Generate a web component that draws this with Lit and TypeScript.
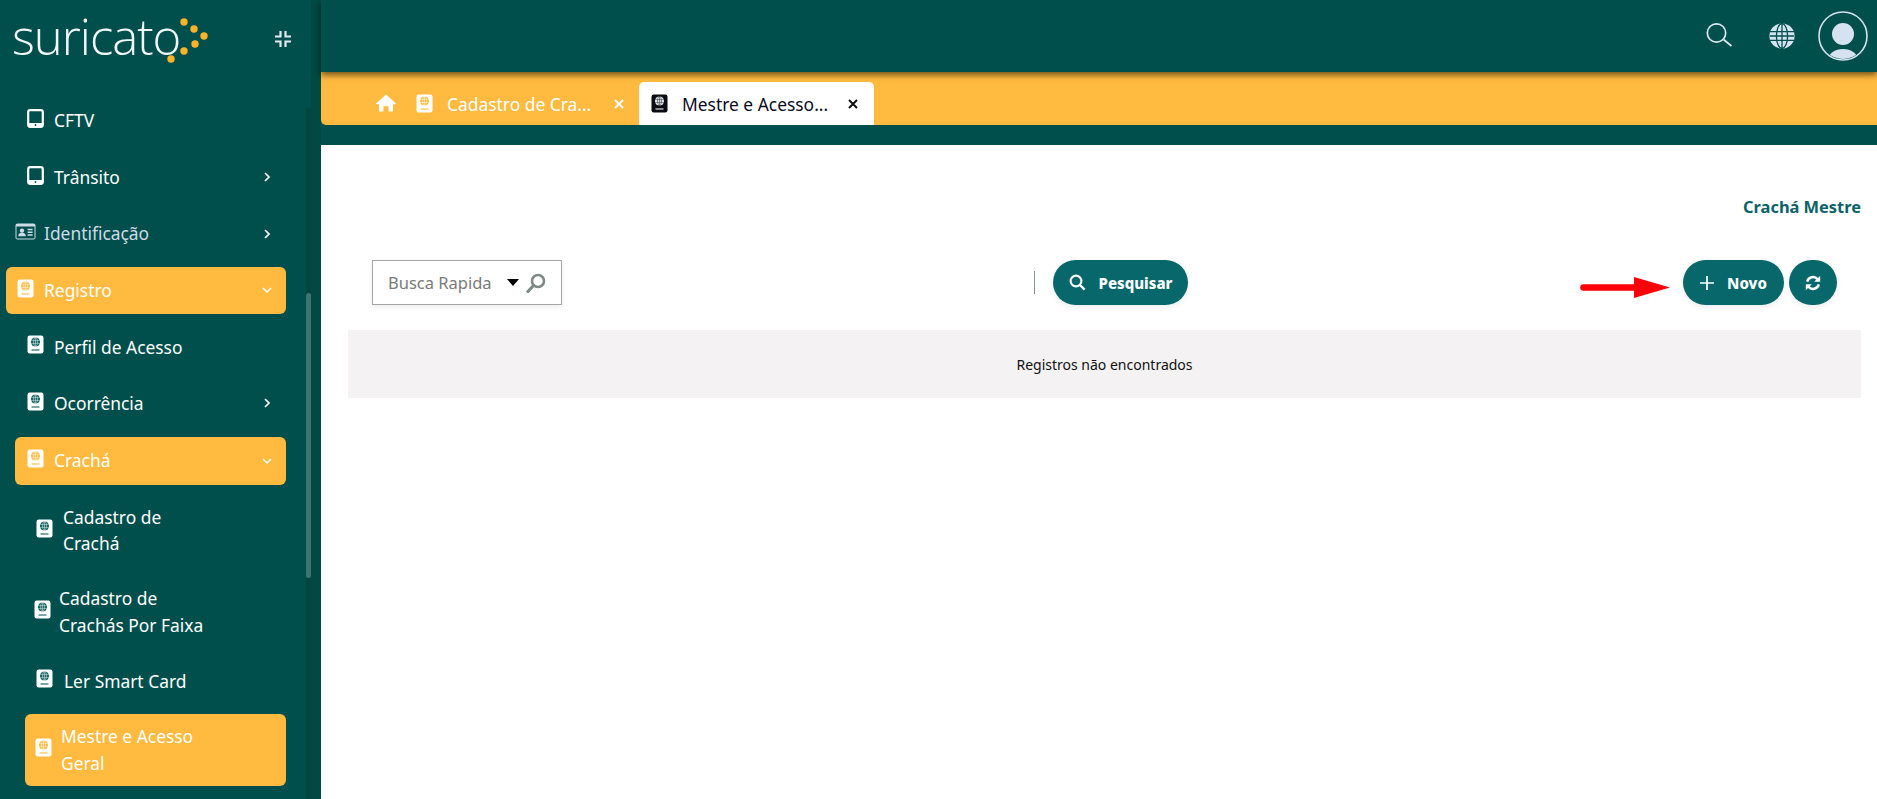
import { LitElement, css, html, svg } from 'lit'
import { customElement } from 'lit/decorators.js'

type NavIcon = 'tablet' | 'card' | 'passport'

interface NavItem {
  lines: string[]
  icon: NavIcon
  left: number
  iconLeft: number
  textLeft: number
  active?: boolean
  chevron?: 'right' | 'down'
  muted?: boolean
  height?: number
}

const NAV: NavItem[] = [
  { lines: ['CFTV'], icon: 'tablet', left: 15, iconLeft: 12, textLeft: 39 },
  { lines: ['Trânsito'], icon: 'tablet', left: 15, iconLeft: 12, textLeft: 39, chevron: 'right' },
  { lines: ['Identificação'], icon: 'card', left: 6, iconLeft: 9, textLeft: 38, chevron: 'right', muted: true },
  { lines: ['Registro'], icon: 'passport', left: 6, iconLeft: 11, textLeft: 38, chevron: 'down', active: true },
  { lines: ['Perfil de Acesso'], icon: 'passport', left: 15, iconLeft: 12, textLeft: 39 },
  { lines: ['Ocorrência'], icon: 'passport', left: 15, iconLeft: 12, textLeft: 39, chevron: 'right' },
  { lines: ['Crachá'], icon: 'passport', left: 15, iconLeft: 12, textLeft: 39, chevron: 'down', active: true, height: 48 },
  { lines: ['Cadastro de', 'Crachá'], icon: 'passport', left: 25, iconLeft: 11, textLeft: 38 },
  { lines: ['Cadastro de', 'Crachás Por Faixa'], icon: 'passport', left: 25, iconLeft: 9, textLeft: 34 },
  { lines: ['Ler Smart Card'], icon: 'passport', left: 25, iconLeft: 11, textLeft: 39 },
  { lines: ['Mestre e Acesso', 'Geral'], icon: 'passport', left: 25, iconLeft: 10, textLeft: 36, active: true },
]

const passport = (body: string, mark: string) => html`
  <svg class="glyph" width="17" height="19" viewBox="0 0 17 19">
    <rect x="0.5" y="0.5" width="16" height="18" rx="2.2" fill=${body}></rect>
    <circle cx="8.5" cy="7" r="4.6" fill=${mark}></circle>
    <g fill="none" stroke=${body} stroke-width="0.45">
      <ellipse cx="8.5" cy="7" rx="2" ry="4.6"></ellipse>
      <path d="M3.9 5.6h9.2M3.9 8.4h9.2M8.5 2.4v9.2"></path>
    </g>
    <path d="M4.5 15h8" stroke=${mark} stroke-width="1.1"></path>
  </svg>
`

const tablet = html`
  <svg class="glyph" width="17" height="19" viewBox="0 0 17 19">
    <rect x="1.2" y="1.2" width="14.6" height="16.6" rx="2" fill="none" stroke="#fff" stroke-width="2.2"></rect>
    <path d="M1.5 14h14v3.5h-14z" fill="#fff"></path>
    <circle cx="8.5" cy="16" r="0.9" fill="#004f4d"></circle>
  </svg>
`

const idCard = html`
  <svg class="glyph" width="21" height="17" viewBox="0 0 21 17">
    <rect x="0.5" y="0.5" width="20" height="16" rx="2" fill="#cfdbe6"></rect>
    <rect x="1.5" y="3.5" width="18" height="12" fill="#004f4d"></rect>
    <circle cx="7" cy="7.6" r="2.2" fill="#cfdbe6"></circle>
    <path d="M3.2 13.2c0-2.6 1.7-3.5 3.8-3.5s3.8 .9 3.8 3.5z" fill="#cfdbe6"></path>
    <path d="M12.6 6.5h5M12.6 9.3h5M12.6 12.1h5" stroke="#cfdbe6" stroke-width="1.5"></path>
  </svg>
`

const chevronRight = html`
  <svg width="8" height="12" viewBox="0 0 8 12"><path d="M2 2l4 4-4 4" fill="none" stroke="#fff" stroke-width="1.7"></path></svg>
`

const chevronDown = html`
  <svg width="12" height="8" viewBox="0 0 12 8"><path d="M2 2l4 4 4-4" fill="none" stroke="#fff" stroke-width="1.5"></path></svg>
`

const close = (color: string) => html`
  <svg class="close" width="10" height="10" viewBox="0 0 10 10">
    <path d="M1 1l8 8M9 1l-8 8" stroke=${color} stroke-width="1.9"></path>
  </svg>
`

const logoDots = [
  [184, 22],
  [194, 29],
  [204, 36],
  [195, 44],
  [184, 51],
  [171, 59],
]

@customElement('app-root')
export class AppRoot extends LitElement {
  render() {
    return html`
      <aside class="sidebar">
        <div class="side-main">
          <div class="brand">
            <span class="logo">suricato</span>
            <svg class="dots" width="210" height="72" viewBox="0 0 210 72">
              ${logoDots.map(([x, y]) => svg`<circle cx=${x} cy=${y} r="3.7" fill="#fbb327"></circle>`)}
            </svg>
            <svg class="compress" width="18" height="18" viewBox="0 0 18 18">
              <path d="M6.5 1v5.5H1M11.5 1v5.5H17M6.5 17v-5.5H1M11.5 17v-5.5H17" fill="none" stroke="#e3e9ee" stroke-width="2.2"></path>
            </svg>
          </div>
          <nav>${NAV.map((item) => this.navItem(item))}</nav>
        </div>
        <div class="track"><div class="thumb"></div></div>
        <div class="edge"></div>
      </aside>

      <div class="main">
        <header class="topbar">
          <svg width="30" height="30" viewBox="0 0 30 30" class="top-search">
            <circle cx="12.5" cy="12" r="9.2" fill="none" stroke="#dbe6ef" stroke-width="1.7"></circle>
            <path d="M19.5 18.5l8 6.5" stroke="#dbe6ef" stroke-width="1.8"></path>
          </svg>
          <svg width="26" height="26" viewBox="0 0 26 26" class="top-globe">
            <circle cx="13" cy="13" r="12.6" fill="#d5e2ef"></circle>
            <g fill="none" stroke="#004f4d" stroke-width="1.3">
              <ellipse cx="13" cy="13" rx="5.6" ry="12.4"></ellipse>
              <path d="M13 .5v25M1 8.6h24M1 13h24M1 17.4h24"></path>
            </g>
          </svg>
          <svg width="50" height="50" viewBox="0 0 50 50" class="top-user">
            <defs><clipPath id="avatar"><circle cx="25" cy="25" r="23"></circle></clipPath></defs>
            <circle cx="25" cy="25" r="24" fill="none" stroke="#d5e2ef" stroke-width="1.6"></circle>
            <circle cx="25" cy="23" r="11" fill="#d5e2ef"></circle>
            <ellipse cx="25" cy="49" rx="15" ry="11" fill="#d5e2ef" clip-path="url(#avatar)"></ellipse>
          </svg>
        </header>

        <div class="tabs">
          <svg class="home" width="20" height="18" viewBox="0 0 20 18">
            <path d="M10 .5L0 9.5c-.2.4 0 .8.5.8H3v6.6c0 .4.3.7.7.7h3.8v-5.4h5v5.4h3.8c.4 0 .7-.3.7-.7v-6.6h2.5c.5 0 .7-.4.5-.8z" fill="#fff"></path>
          </svg>
          <div class="tab">
            ${passport('#fff', '#ffba3f')}
            <span class="tab-text">Cadastro de Cra...</span>
            ${close('#fff')}
          </div>
          <div class="tab current">
            ${passport('#0b0b12', '#e8eef2')}
            <span class="tab-text">Mestre e Acesso...</span>
            ${close('#0b0b12')}
          </div>
        </div>

        <div class="band"></div>

        <section class="content">
          <h2>Crachá Mestre</h2>
          <div class="toolbar">
            <div class="quick">
              <span>Busca Rapida</span>
              <i class="caret"></i>
              <svg width="20" height="20" viewBox="0 0 20 20">
                <circle cx="12" cy="8" r="6" fill="none" stroke="#7d8a85" stroke-width="2.6"></circle>
                <path d="M7.5 12.5L2 18.5" stroke="#7d8a85" stroke-width="3.2" stroke-linecap="round"></path>
              </svg>
            </div>
            <span class="divider"></span>
            <button class="btn search">
              <svg width="17" height="17" viewBox="0 0 17 17">
                <circle cx="7" cy="7" r="5.4" fill="none" stroke="#fff" stroke-width="2.1"></circle>
                <path d="M11 11l4.6 4.6" stroke="#fff" stroke-width="2.3"></path>
              </svg>
              Pesquisar
            </button>
            <svg class="arrow" width="90" height="21" viewBox="0 0 90 21">
              <path d="M3.5 7.2H54V0l36 10.5L54 21v-7.2H3.5a3.3 3.3 0 0 1 0-6.6z" fill="#fb0007"></path>
            </svg>
            <button class="btn novo">
              <svg width="14" height="14" viewBox="0 0 14 14"><path d="M7 0v14M0 7h14" stroke="#fff" stroke-width="1.7"></path></svg>
              Novo
            </button>
            <button class="btn refresh" aria-label="Atualizar">
              <svg width="16" height="16" viewBox="0 0 16 16">
                <path d="M2.2 6.6A6 6 0 0 1 12.6 4.2" fill="none" stroke="#fff" stroke-width="2.4"></path>
                <path d="M15.2 .8v6h-6z" fill="#fff"></path>
                <path d="M13.8 9.4A6 6 0 0 1 3.4 11.8" fill="none" stroke="#fff" stroke-width="2.4"></path>
                <path d="M.8 15.2v-6h6z" fill="#fff"></path>
              </svg>
            </button>
          </div>
          <div class="empty">Registros não encontrados</div>
        </section>
      </div>
    `
  }

  private navItem(item: NavItem) {
    const height = item.height ?? (item.lines.length > 1 ? 72 : 47)
    const classes = `item ${item.active ? 'active' : ''} ${item.muted ? 'muted' : ''}`
    return html`
      <a
        class=${classes}
        style=${`margin-left:${item.left}px;height:${height}px;padding-left:${item.iconLeft}px`}
      >
        <span class="icon" style=${`width:${item.textLeft - item.iconLeft}px`}>${this.navIcon(item)}</span>
        <span class="label">${item.lines.map((line) => html`<span>${line}</span>`)}</span>
        ${item.chevron
          ? html`<span class="chevron">${item.chevron === 'right' ? chevronRight : chevronDown}</span>`
          : ''}
      </a>
    `
  }

  private navIcon(item: NavItem) {
    if (item.icon === 'tablet') return tablet
    if (item.icon === 'card') return idCard
    return passport('#fff', item.active ? '#ffba3f' : '#0c625f')
  }

  static styles = css`
    :host {
      display: flex;
      width: 1877px;
      height: 799px;
      overflow: hidden;
      background: #004f4d;
      font-family: 'Noto Sans', 'Open Sans', sans-serif;
      color: #fff;
    }

    .sidebar {
      flex: 0 0 321px;
      display: flex;
    }

    .side-main {
      flex: 0 0 306px;
    }

    .brand {
      position: relative;
      height: 97px;
    }

    .logo {
      position: absolute;
      left: 12px;
      top: 4px;
      font-family: 'Open Sans', sans-serif;
      font-weight: 350;
      font-size: 49px;
      line-height: 64px;
      letter-spacing: -1px;
      color: #f2f7f7;
    }

    .dots {
      position: absolute;
      left: 0;
      top: 0;
    }

    .compress {
      position: absolute;
      left: 274px;
      top: 30px;
    }

    nav {
      display: flex;
      flex-direction: column;
      gap: 9.6px;
    }

    .item {
      display: flex;
      align-items: center;
      margin-right: 20px;
      box-sizing: border-box;
      border-radius: 6px;
      font-size: 17.4px;
      line-height: 26.5px;
      color: #fff;
    }

    .item.active {
      background: #ffba3f;
    }

    .item.muted {
      color: #cfdbe6;
    }

    .icon {
      flex: none;
      display: flex;
      align-items: center;
      margin-top: -4px;
    }

    .glyph {
      display: block;
    }

    .label {
      display: flex;
      flex-direction: column;
      flex: 1;
      min-width: 0;
    }

    .chevron {
      flex: none;
      width: 38px;
      display: flex;
      justify-content: center;
    }

    .track {
      flex: 0 0 5px;
      margin-top: 108px;
      background: #03463f;
    }

    .thumb {
      margin-top: 185px;
      height: 285px;
      border-radius: 3px;
      background: #3f7471;
    }

    .edge {
      flex: 0 0 10px;
      background: #024843;
    }

    .main {
      flex: 1;
      min-width: 0;
      display: flex;
      flex-direction: column;
    }

    .topbar {
      position: relative;
      z-index: 1;
      height: 72px;
      flex: none;
      background: #004f4d;
      box-shadow: 0 3px 6px rgba(0, 0, 0, 0.55);
      display: flex;
      align-items: center;
      justify-content: flex-end;
      padding-right: 9px;
    }

    .top-search {
      margin-right: 35px;
      margin-top: -1px;
    }

    .top-globe {
      margin-right: 23px;
      margin-top: -1px;
    }

    .top-user {
      margin-top: -1px;
    }

    .tabs {
      flex: none;
      height: 53px;
      background: #ffba3f;
      border-bottom-left-radius: 5px;
      display: flex;
      align-items: flex-end;
      padding-left: 55px;
      box-sizing: border-box;
    }

    .home {
      margin-bottom: 13px;
      margin-right: 20px;
    }

    .tab {
      width: 223px;
      height: 43px;
      display: flex;
      align-items: center;
      font-size: 17.4px;
      color: #fff;
      box-sizing: border-box;
    }

    .tab-text {
      width: 167px;
      margin-left: 14px;
      white-space: nowrap;
    }

    .tab.current {
      width: 235px;
      padding-left: 12px;
      background: #fff;
      color: #0b0b22;
      border-radius: 5px 5px 0 0;
    }

    .tab.current .tab-text {
      width: 166px;
    }

    .band {
      flex: none;
      height: 20px;
    }

    .content {
      flex: 1;
      background: #fff;
      padding: 0 16px 0 27px;
    }

    h2 {
      margin: 51px 0 0;
      font-size: 16.4px;
      line-height: 22px;
      font-weight: 700;
      text-align: right;
      color: #0b6368;
    }

    .toolbar {
      display: flex;
      align-items: center;
      height: 45px;
      margin-top: 42px;
      padding-left: 24px;
    }

    .quick {
      box-sizing: border-box;
      width: 190px;
      height: 45px;
      display: flex;
      align-items: center;
      padding-left: 15px;
      border: 1px solid #a5a5a5;
      box-shadow: 0 2px 6px rgba(0, 0, 0, 0.08);
      color: #7a7a7a;
      font-size: 16.5px;
    }

    .quick span {
      width: 119px;
    }

    .caret {
      width: 0;
      height: 0;
      margin-right: 7px;
      border-style: solid;
      border-width: 7px 6px 0;
      border-color: #000 transparent transparent;
    }

    .divider {
      width: 1px;
      height: 23px;
      margin-left: 472px;
      margin-right: 18px;
      background: #8a8f8f;
    }

    .btn {
      height: 45px;
      border: 0;
      border-radius: 23px;
      background: #07676a;
      color: #fff;
      font-family: inherit;
      font-weight: 800;
      font-size: 15px;
      display: flex;
      align-items: center;
      justify-content: center;
      padding: 0;
      box-shadow: 0 2px 6px rgba(0, 0, 0, 0.08);
    }

    .search {
      width: 135px;
      gap: 13px;
    }

    .arrow {
      margin-left: 392px;
      margin-right: 13px;
      margin-top: 9px;
    }

    .novo {
      width: 101px;
      gap: 13px;
    }

    .refresh {
      width: 48px;
      margin-left: 5px;
    }

    .empty {
      margin-top: 25px;
      height: 68px;
      display: flex;
      align-items: center;
      justify-content: center;
      background: #f4f2f2;
      color: #111;
      font-size: 14px;
    }
  `
}
